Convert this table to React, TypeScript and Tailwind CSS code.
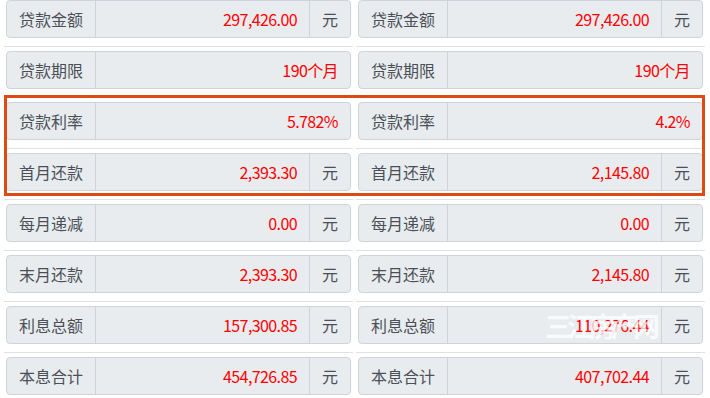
import React from 'react';

type Item = { label: string; value: string; unit?: string };

const left: Item[] = [
  { label: '贷款金额', value: '297,426.00', unit: '元' },
  { label: '贷款期限', value: '190个月' },
  { label: '贷款利率', value: '5.782%' },
  { label: '首月还款', value: '2,393.30', unit: '元' },
  { label: '每月递减', value: '0.00', unit: '元' },
  { label: '末月还款', value: '2,393.30', unit: '元' },
  { label: '利息总额', value: '157,300.85', unit: '元' },
  { label: '本息合计', value: '454,726.85', unit: '元' },
];

const right: Item[] = [
  { label: '贷款金额', value: '297,426.00', unit: '元' },
  { label: '贷款期限', value: '190个月' },
  { label: '贷款利率', value: '4.2%' },
  { label: '首月还款', value: '2,145.80', unit: '元' },
  { label: '每月递减', value: '0.00', unit: '元' },
  { label: '末月还款', value: '2,145.80', unit: '元' },
  { label: '利息总额', value: '110,276.44', unit: '元' },
  { label: '本息合计', value: '407,702.44', unit: '元' },
];

const Field: React.FC<{ item: Item }> = ({ item }) => (
  <div className="flex h-[38px] rounded-[4px] border border-[#ced4da] bg-[#e9ecef] text-[16px] leading-[1.5]">
    <div className="flex items-center border-r border-[#ced4da] px-[12px] text-[#495057] whitespace-nowrap">
      {item.label}
    </div>
    <div className="flex flex-1 items-center justify-end px-[12px] tracking-[-0.6px] text-[#ff0000]">{item.value}</div>
    {item.unit && (
      <div className="flex items-center border-l border-[#ced4da] px-[12px] text-[#495057]">{item.unit}</div>
    )}
  </div>
);

export default function App() {
  return (
    <div
      className="relative h-[398px] w-[710px] overflow-hidden bg-white"
      style={{ fontFamily: '"Noto Sans CJK SC", "Noto Sans", sans-serif' }}
    >
      <div className="-mt-[5px] pl-[4px]">
        {left.map((item, i) => (
          <div key={i} className="grid grid-cols-[349px_349px] gap-x-[3px]">
            <div className="border-t border-[#dee2e6] px-[2px] pt-[4px] pb-[8px]">
              <Field item={item} />
            </div>
            <div className="border-t border-[#dee2e6] px-[2px] pt-[4px] pb-[8px]">
              <Field item={right[i]} />
            </div>
          </div>
        ))}
      </div>

      {/* highlight around rate + first payment */}
      <div className="pointer-events-none absolute left-[4px] top-[95px] h-[101px] w-[701px] border-[3px] border-[#dd4a12]" />

      {/* watermark */}
      <div className="pointer-events-none absolute left-[545px] top-[306px] text-[27px] font-bold tracking-[-5px] text-white opacity-75">
        三江房产网
      </div>
    </div>
  );
}
